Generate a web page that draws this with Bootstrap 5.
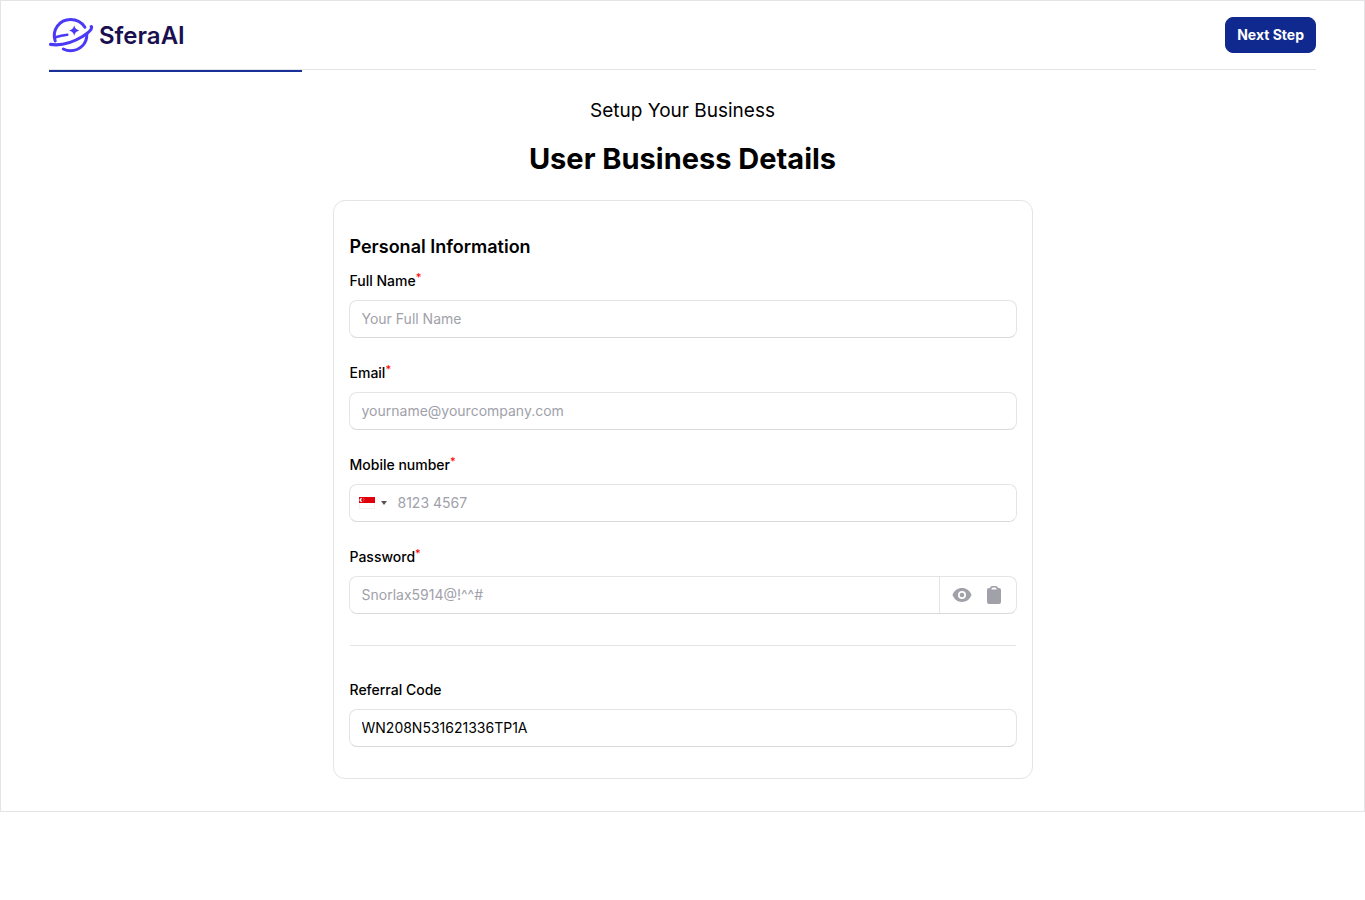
<!DOCTYPE html>
<html lang="en">
<head>
<meta charset="utf-8">
<meta name="viewport" content="width=device-width, initial-scale=1">
<title>SferaAI – User Business Details</title>
<link href="https://cdn.jsdelivr.net/npm/bootstrap@5.3.0/dist/css/bootstrap.min.css" rel="stylesheet">
<style>
  :root { --line: #e4e4e7; --brand: #10298e; --muted: #a1a1aa; }
  body { font-family: Inter, "Liberation Sans", sans-serif; font-size: 14px; line-height: 20px; color: #000; background: #fff; }
  .shell { border: 1px solid var(--line); padding: 0 48px 32px; }
  .topbar { border-bottom: 1px solid var(--line); padding: 16px 0; }
  .brand-name { font-size: 24px; line-height: 34px; padding-top: 2px; font-weight: 600; color: #1a0f4f; margin-left: 5px; }
  .btn-brand { --bs-btn-color: #fff; --bs-btn-bg: var(--brand); --bs-btn-border-color: var(--brand); --bs-btn-hover-color: #fff; --bs-btn-hover-bg: #0c2070; --bs-btn-hover-border-color: #0c2070; font-size: 14px; line-height: 20px; font-weight: 700; padding: 7px 11px; border-radius: 8px; }
  .step-progress { height: 2px; border-radius: 0; background: transparent; }
  .step-progress .progress-bar { background: #17309a; }
  .eyebrow { font-size: 19px; line-height: 28px; margin: 25px 0 16px; }
  h1 { font-size: 29px; line-height: 36px; font-weight: 700; margin: 0 0 23px; }
  .panel { max-width: 700px; border: 1px solid var(--line); border-radius: 12px; padding: 32px 15px 31px; }
  h2 { font-size: 18px; line-height: 28px; font-weight: 600; margin: 0 0 10px 1px; }
  .form-label { display: block; font-weight: 500; margin: 0 0 9px 1px; }
  .req { color: #f00; font-size: 11px; line-height: 0; top: -5px; font-weight: 500; }
  .field { margin-bottom: 25px; }
  .form-control { font-size: 14px; line-height: 20px; padding: 8px 12px; color: #000; border: 1px solid var(--line); border-radius: 8px; }
  .form-control::placeholder { color: var(--muted); }
  .input-group { border: 1px solid var(--line); border-radius: 8px; }
  .input-group .form-control { border: 0; }
  .form-control, .input-group { border-bottom-color: #d9d9dd; }
  .icon-btn { border: 0; background: none; padding: 0; display: flex; color: var(--muted); }
  .country { padding: 0 8px 0 9px; gap: 6px; }
  .country + .form-control { padding-left: 4px; }
  .pw-tools { border-left: 1px solid var(--line); padding: 0 12px; gap: 12px; }
  .rule { border-top: 1px solid var(--line); opacity: 1; margin: 31px 1px 34px; }
</style>
</head>
<body>
<div class="shell">
  <header class="topbar d-flex align-items-center justify-content-between">
    <a href="#" class="d-flex align-items-center text-decoration-none">
      <svg width="45" height="36" viewBox="0 0 45 36" fill="none" stroke="#4b3af5" stroke-width="3" stroke-linecap="round" aria-hidden="true">
        <path d="M6.200 24C2.500 13 10.500 2.500 21.500 2.500c6 0 11.300 2.800 14.400 7.800M37.800 17.500c.3 9.200-7 16.200-16.300 16.200-2.700 0-5-.6-7.200-1.700"/>
        <path d="M1.600 27.400C13 29 24.500 25 33.500 19.500c6-3.700 10-7.600 8.800-9.900" stroke-width="3.200"/>
        <path d="M5.600 20.500c4.500-1.200 8-2 12.700-2.700" stroke-width="2.600"/>
        <path d="M25.200 8.300q.9 4.400 5.100 5.200-4.200.9-5.100 5.200-.9-4.300-5.100-5.200 4.200-.8 5.100-5.200z" fill="#4b3af5" stroke="none"/>
      </svg>
      <span class="brand-name">SferaAI</span>
    </a>
    <button type="button" class="btn btn-brand">Next Step</button>
  </header>
  <div class="progress step-progress" role="progressbar" aria-label="Setup progress" aria-valuenow="20" aria-valuemin="0" aria-valuemax="100">
    <div class="progress-bar" style="width: 20%"></div>
  </div>

  <main>
    <p class="eyebrow text-center">Setup Your Business</p>
    <h1 class="text-center">User Business Details</h1>

    <form class="panel mx-auto">
      <h2>Personal Information</h2>
      <div class="field">
        <label class="form-label" for="fullName">Full Name<sup class="req">*</sup></label>
        <input type="text" class="form-control" id="fullName" placeholder="Your Full Name">
      </div>
      <div class="field">
        <label class="form-label" for="email">Email<sup class="req">*</sup></label>
        <input type="email" class="form-control" id="email" placeholder="yourname@yourcompany.com">
      </div>
      <div class="field">
        <label class="form-label" for="mobile">Mobile number<sup class="req">*</sup></label>
        <div class="input-group flex-nowrap">
          <button type="button" class="icon-btn country align-items-center" aria-label="Country: Singapore">
            <svg width="16" height="12" viewBox="0 0 16 12" aria-hidden="true">
              <rect x=".5" y=".5" width="15" height="11" fill="#fff" stroke="#f2f2f2"/>
              <path d="M0 0h16v6H0z" fill="#e00009"/>
              <path d="M3.200 1.300a1.900 1.900 0 1 0 0 3.400 2.200 2.200 0 0 1 0-3.400z" fill="#fff"/>
              <path d="M4 1.500h.7v.7H4zM5.200 2.400h.7v.7h-.7zM4 3.500h.7v.7H4z" fill="#fff" opacity=".7"/>
            </svg>
            <svg width="6" height="4" viewBox="0 0 6 4" aria-hidden="true"><path d="M0 0h6L3 4z" fill="#555"/></svg>
          </button>
          <input type="tel" class="form-control" id="mobile" placeholder="8123 4567">
        </div>
      </div>
      <div>
        <label class="form-label" for="password">Password<sup class="req">*</sup></label>
        <div class="input-group flex-nowrap">
          <input type="password" class="form-control" id="password" placeholder="Snorlax5914@!^^#">
          <div class="pw-tools d-flex align-items-center ms-0">
            <button type="button" class="icon-btn" aria-label="Show password">
              <svg width="20" height="20" viewBox="0 0 20 20" fill="currentColor" aria-hidden="true">
                <circle cx="10" cy="10" r="2.300"/>
                <path fill-rule="evenodd" d="M.7 10.600a1.700 1.700 0 0 1 0-1.200C2.200 5.600 5.800 3 10 3s7.800 2.600 9.300 6.400c.2.400.2.800 0 1.200C17.800 14.400 14.200 17 10 17S2.200 14.400.7 10.600zM14 10a4 4 0 1 1-8 0 4 4 0 0 1 8 0z"/>
              </svg>
            </button>
            <button type="button" class="icon-btn" aria-label="Copy password">
              <svg width="20" height="20" viewBox="0 0 20 20" fill="currentColor" aria-hidden="true">
                <path fill-rule="evenodd" d="M8.500 1A2.500 2.500 0 0 0 6 3H5a2 2 0 0 0-2 2v12a2 2 0 0 0 2 2h10a2 2 0 0 0 2-2V5a2 2 0 0 0-2-2h-1a2.500 2.500 0 0 0-2.500-2h-3zM7.500 4a1.500 1.500 0 0 1 1.500-1.500h2A1.500 1.500 0 0 1 12.500 4v.5h-5V4z"/>
              </svg>
            </button>
          </div>
        </div>
      </div>
      <hr class="rule">
      <div>
        <label class="form-label" for="referral">Referral Code</label>
        <input type="text" class="form-control" id="referral" value="WN208N531621336TP1A">
      </div>
    </form>
  </main>
</div>
<script src="https://cdn.jsdelivr.net/npm/bootstrap@5.3.0/dist/js/bootstrap.bundle.min.js"></script>
</body>
</html>
